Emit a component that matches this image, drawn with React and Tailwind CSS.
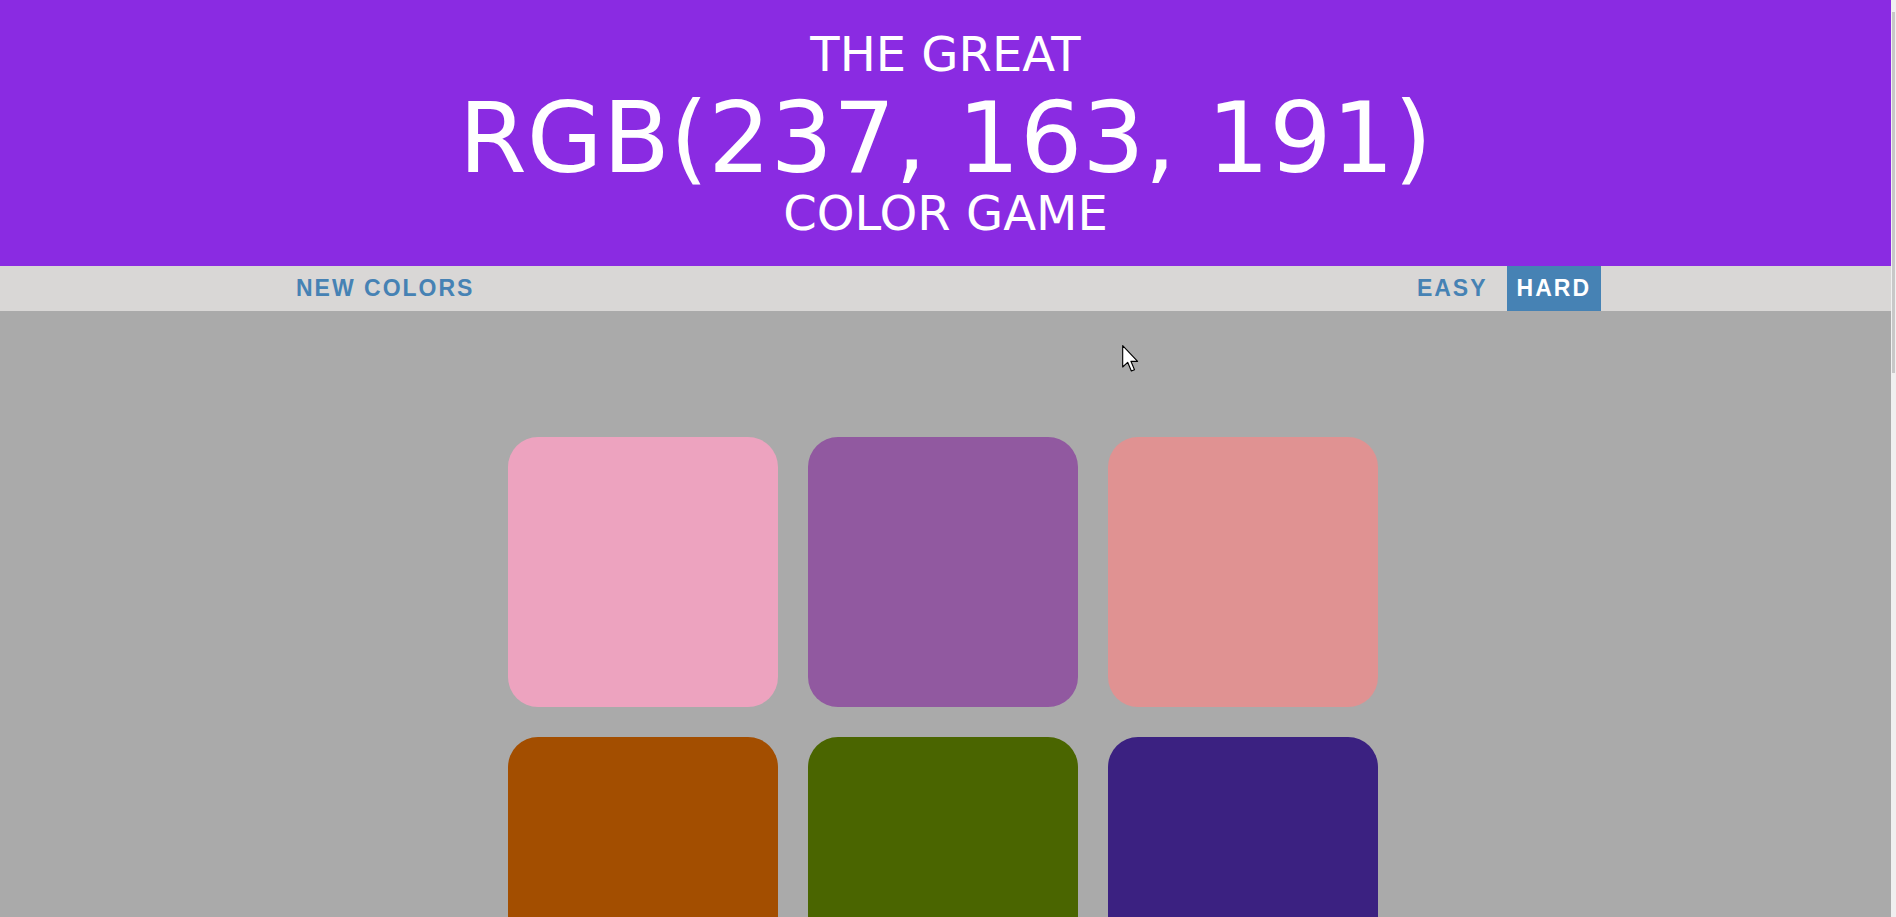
import React from 'react';

const colors = ['#eda3bf', '#9159a0', '#e09292', '#a34e00', '#4a6500', '#3b2181'];

export default function App() {
  return (
    <div className="flex h-screen overflow-hidden bg-[#aaaaaa]">
      <div className="relative flex-1 flex flex-col">
        {/* Header */}
        <header className="shrink-0 h-[266px] bg-[#8a2be2] text-white text-center pt-[26px] font-['DejaVu_Sans',sans-serif] uppercase">
          <div className="text-[48px] leading-[56px]">The Great</div>
          <div className="text-[98px] leading-[112px]">RGB(237, 163, 191)</div>
          <div className="text-[48px] leading-[38px]">Color Game</div>
        </header>

        {/* Controls */}
        <nav className="shrink-0 h-[45px] bg-[#d9d7d6] font-['Liberation_Sans',Arial,sans-serif] font-bold text-[23px] tracking-[2px]">
          <div className="ml-[286px] w-[1315px] h-full flex justify-between">
            <button className="h-full px-[10px] uppercase text-[#4682b4]">New Colors</button>
            <div className="flex h-full gap-[9px]">
              <button className="h-full px-[10px] uppercase text-[#4682b4]">Easy</button>
              <button className="h-full px-[10px] uppercase bg-[#4682b4] text-white">Hard</button>
            </div>
          </div>
        </nav>

        {/* Squares */}
        <div className="shrink-0 ml-[508px] mt-[126px] grid grid-cols-[repeat(3,270px)] gap-[30px]">
          {colors.map((c, i) => (
            <div key={i} className="w-[270px] h-[270px] rounded-[30px]" style={{ backgroundColor: c }} />
          ))}
        </div>

        {/* mouse pointer */}
        <svg className="absolute left-[1121px] top-[345px]" width="19" height="27" viewBox="0 0 12 19">
          <path d="M0.5 0.5 L0.5 15.5 L4 12.2 L6.6 18.3 L8.8 17.4 L6.3 11.5 L11 11.5 Z" fill="#fff" stroke="#000" strokeWidth="0.8" strokeLinejoin="round" />
        </svg>
      </div>

      {/* scrollbar strip */}
      <div className="w-[5px] bg-[#f0f0f0] pt-[12px]">
        <div className="h-[361px] w-[3px] ml-[1px] bg-[#c8c8c8]" />
      </div>
    </div>
  );
}
